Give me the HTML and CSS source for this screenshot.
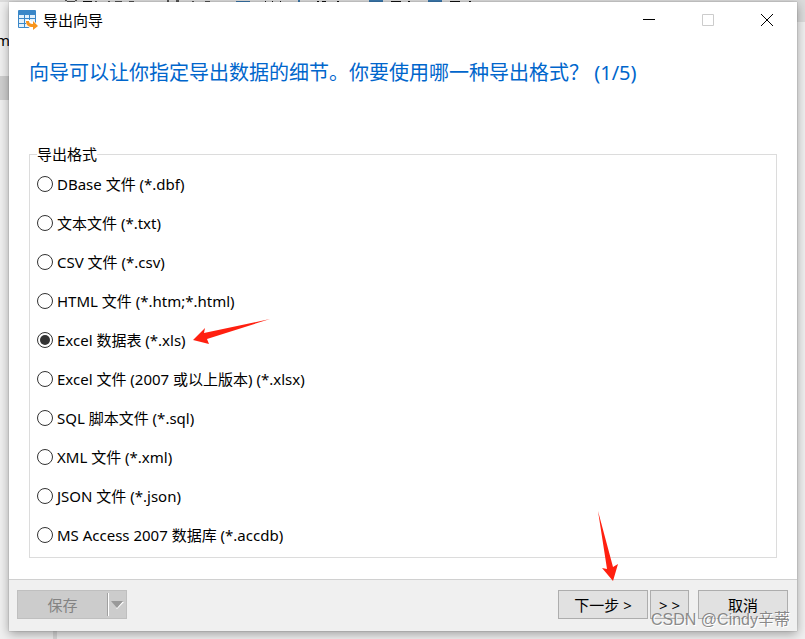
FILE: index.html
```html
<!DOCTYPE html>
<html lang="zh-CN">
<head>
  <meta charset="UTF-8">
  <meta name="viewport" content="width=device-width, initial-scale=1.0">
  <title>导出向导</title>
  <link rel="stylesheet" href="styles.css">
</head>
<body>
  <!-- main window behind the dialog -->
  <div class="backdrop" aria-hidden="true">
    <svg class="toolbar-edge" width="560" height="2" viewBox="0 0 560 2">
      <path fill="#555" d="M65 0h2v1h8V0h2v1h-2v1h-8V1h-2zM95 1h2v1h-2zM108 1h2v1h-2zM115 1h7v1h-7zM129 1h5v1h-5zM167 0h2v2h-2zM176 0h3v2h-3zM192 1h2v1h-2zM205 1h5v1h-5z"/>
      <path fill="#111" d="M83 1h9v1h-9zM265 1h1v1h-1zM272 1h1v1h-1zM280 1h1v1h-1zM317 1h2v1h-2zM322 1h4v1h-4zM337 1h2v1h-2zM391 1h10v1h-10zM408 1h2v1h-2zM450 1h10v1h-10zM469 1h2v1h-2z"/>
      <path fill="#3b78ad" d="M236 1h14v1h-14zM298 0h2v2h-2zM369 0h14v2h-14zM428 0h14v2h-14z"/>
    </svg>
    <div class="backdrop-text">m</div>
    <div class="backdrop-row"></div>
    <div class="backdrop-corner"></div>
    <div class="backdrop-split"></div>
  </div>

  <div class="window">
    <div class="titlebar">
      <svg class="app-icon" width="20" height="20" viewBox="0 0 20 20">
        <rect x="0" y="0" width="18" height="18" rx="1" fill="#3a87c8"/>
        <path fill="#e4f1fb" d="M1 5h5v3H1zM7 5h4v3H7zM12 5h5v3h-5zM1 9h5v4H1zM7 9h4v4H7zM12 9h5v4h-5zM1 14h5v3H1zM7 14h4v3H7z"/>
        <path fill="#fff" d="M8 10h4l2 2 1-2 5 5v5h-6l-6-5z"/>
        <path fill="#f7941d" d="M8 11h3c0 2 1 3 4 3v-3l5 5-5 4v-3c-5 0-7-2-7-6z"/>
      </svg>
      <span class="title">导出向导</span>
      <button type="button" class="win-button" aria-label="最小化">
        <svg width="12" height="12" viewBox="0 0 12 12"><path d="M0 5.5h12"/></svg>
      </button>
      <button type="button" class="win-button" aria-label="最大化" disabled>
        <svg width="12" height="12" viewBox="0 0 12 12"><path d="M.5.5h11v11H.5z"/></svg>
      </button>
      <button type="button" class="win-button" aria-label="关闭">
        <svg width="12" height="12" viewBox="0 0 12 12"><path d="M0 0l12 12M12 0L0 12"/></svg>
      </button>
    </div>

    <form class="wizard">
      <div class="content">
        <h1>向导可以让你指定导出数据的细节。你要使用哪一种导出格式？ (1/5)</h1>
        <fieldset class="formats">
          <legend>导出格式</legend>
          <label class="option"><input type="radio" name="format" value="dbf">DBase 文件 (*.dbf)</label>
          <label class="option"><input type="radio" name="format" value="txt">文本文件 (*.txt)</label>
          <label class="option"><input type="radio" name="format" value="csv">CSV 文件 (*.csv)</label>
          <label class="option"><input type="radio" name="format" value="html">HTML 文件 (*.htm;*.html)</label>
          <label class="option"><input type="radio" name="format" value="xls" checked>Excel 数据表 (*.xls)
            <svg class="arrow arrow-left" width="77" height="26" viewBox="0 0 77 26"><path d="M0 21L12 9l-1 5L77 0 14 20l2 5z"/></svg>
          </label>
          <label class="option"><input type="radio" name="format" value="xlsx">Excel 文件 (2007 或以上版本) (*.xlsx)</label>
          <label class="option"><input type="radio" name="format" value="sql">SQL 脚本文件 (*.sql)</label>
          <label class="option"><input type="radio" name="format" value="xml">XML 文件 (*.xml)</label>
          <label class="option"><input type="radio" name="format" value="json">JSON 文件 (*.json)</label>
          <label class="option"><input type="radio" name="format" value="accdb">MS Access 2007 数据库 (*.accdb)</label>
        </fieldset>
      </div>

      <div class="footer">
        <div class="save">
          <button type="button" class="save-main" disabled>保存</button>
          <button type="button" class="save-menu" aria-label="保存选项" disabled>
            <svg width="13" height="8" viewBox="0 0 13 8"><path fill="#fff" d="M6 8l7-7h-2L5 7z"/><path fill="#999" d="M0 0h12L6 7z"/></svg>
          </button>
        </div>
        <div class="nav">
          <button type="button" class="button next">下一步 &gt;
            <svg class="arrow arrow-down" width="20" height="70" viewBox="0 0 20 70"><path d="M0 0l15 56 5-3-5 17L4 57l5 1z"/></svg>
          </button>
          <button type="button" class="button skip">&gt; &gt;</button>
          <button type="button" class="button">取消</button>
        </div>
      </div>
    </form>
  </div>
  <div class="watermark">CSDN @Cindy辛蒂</div>
</body>
</html>
```
FILE: styles.css
```css
* {
  box-sizing: border-box;
}
body {
  position: relative;
  display: flex;
  min-height: 100vh;
  margin: 0;
  padding: 2px 8px 8px 9px;
  overflow: hidden;
  background-color: #f0f0f0;
  color: #000;
  font-family: "Noto Sans", "Noto Sans CJK SC", sans-serif;
  font-size: 15px;
  line-height: 20px;
}

/* main window behind the dialog */
.backdrop {
  position: absolute;
  inset: 0;
}
.toolbar-edge {
  position: absolute;
  top: 0;
  left: 0;
  background-color: #dcdcdc;
}
.backdrop-text {
  position: absolute;
  top: 30px;
  left: -4px;
}
.backdrop-row {
  position: absolute;
  top: 76px;
  left: 0;
  width: 9px;
  height: 24px;
  background-color: #cfcfcf;
}
.backdrop-corner {
  position: absolute;
  top: 0;
  right: 0;
  width: 245px;
  height: 22px;
  background-color: #dcdcdc;
}
.backdrop-split {
  position: absolute;
  bottom: 0;
  left: 53px;
  width: 4px;
  height: 9px;
  background-color: #d8d8d8;
}

.window {
  position: relative;
  display: flex;
  flex: 1;
  flex-direction: column;
  background-color: #fff;
  box-shadow: 0 0 1px rgba(0, 0, 0, 0.4), 0 3px 10px rgba(0, 0, 0, 0.35);
}
.titlebar {
  display: flex;
  align-items: center;
  height: 36px;
  padding: 0 1px 0 9px;
}
.title {
  flex: 1;
  margin-left: 5px;
}
.win-button {
  display: flex;
  align-items: center;
  justify-content: center;
  width: 59px;
  height: 32px;
  padding: 0;
  border: none;
  background: none;
}
.win-button path {
  fill: none;
  stroke: #000;
}
.win-button:disabled path {
  stroke: #ccc;
}

.wizard {
  display: flex;
  flex: 1;
  flex-direction: column;
}
.content {
  flex: 1;
  padding: 20px;
}
h1 {
  margin: 0 0 56px;
  color: #0066cc;
  font-size: 20px;
  font-weight: normal;
  line-height: 30px;
}
.formats {
  margin: 0;
  padding: 0 7px 3px;
  border: 1px solid #dcdcdc;
}
.formats legend {
  padding: 0;
}
.option {
  position: relative;
  display: flex;
  align-items: center;
  width: fit-content;
  height: 39px;
}
.option input {
  appearance: none;
  width: 16px;
  height: 16px;
  margin: 0 4px 0 0;
  border: 1px solid #333;
  border-radius: 50%;
  background-color: #fff;
}
.option input:checked {
  background-color: #333;
  background-clip: content-box;
  padding: 2px;
}

/* red pointers */
.arrow {
  position: absolute;
  fill: #ff2010;
  pointer-events: none;
}
.arrow-left {
  bottom: 14px;
  left: 156px;
}
.arrow-down {
  right: 29px;
  bottom: 37px;
}

.footer {
  display: flex;
  justify-content: space-between;
  padding: 10px 9px 12px 8px;
  border-top: 1px solid #d0d0d0;
  background-color: #f0f0f0;
}
.save {
  display: flex;
  align-items: center;
  width: 110px;
  height: 29px;
  border: 1px solid #bfbfbf;
  background-color: #ccc;
}
.save button {
  padding: 0;
  border: none;
  background: none;
  color: #838383;
  font: inherit;
}
.save-main {
  flex: 1;
}
.save .save-menu {
  display: flex;
  align-items: center;
  justify-content: center;
  width: 19px;
  height: 23px;
  border-left: 1px solid #a0a0a0;
  box-shadow: inset 1px 0 #fff;
}
.nav {
  display: flex;
}
.button {
  position: relative;
  width: 90px;
  height: 29px;
  padding: 0;
  border: 1px solid #adadad;
  background-color: #e1e1e1;
  color: #000;
  font: inherit;
}
.next {
  margin-right: 2px;
}
.skip {
  width: 39px;
  margin-right: 9px;
}

.watermark {
  position: absolute;
  right: 15px;
  bottom: 9px;
  color: rgba(110, 110, 110, 0.8);
  font-family: "Liberation Sans", "Noto Sans CJK SC", sans-serif;
  font-size: 16px;
  text-shadow: 1px 1px #fff;
}
```
